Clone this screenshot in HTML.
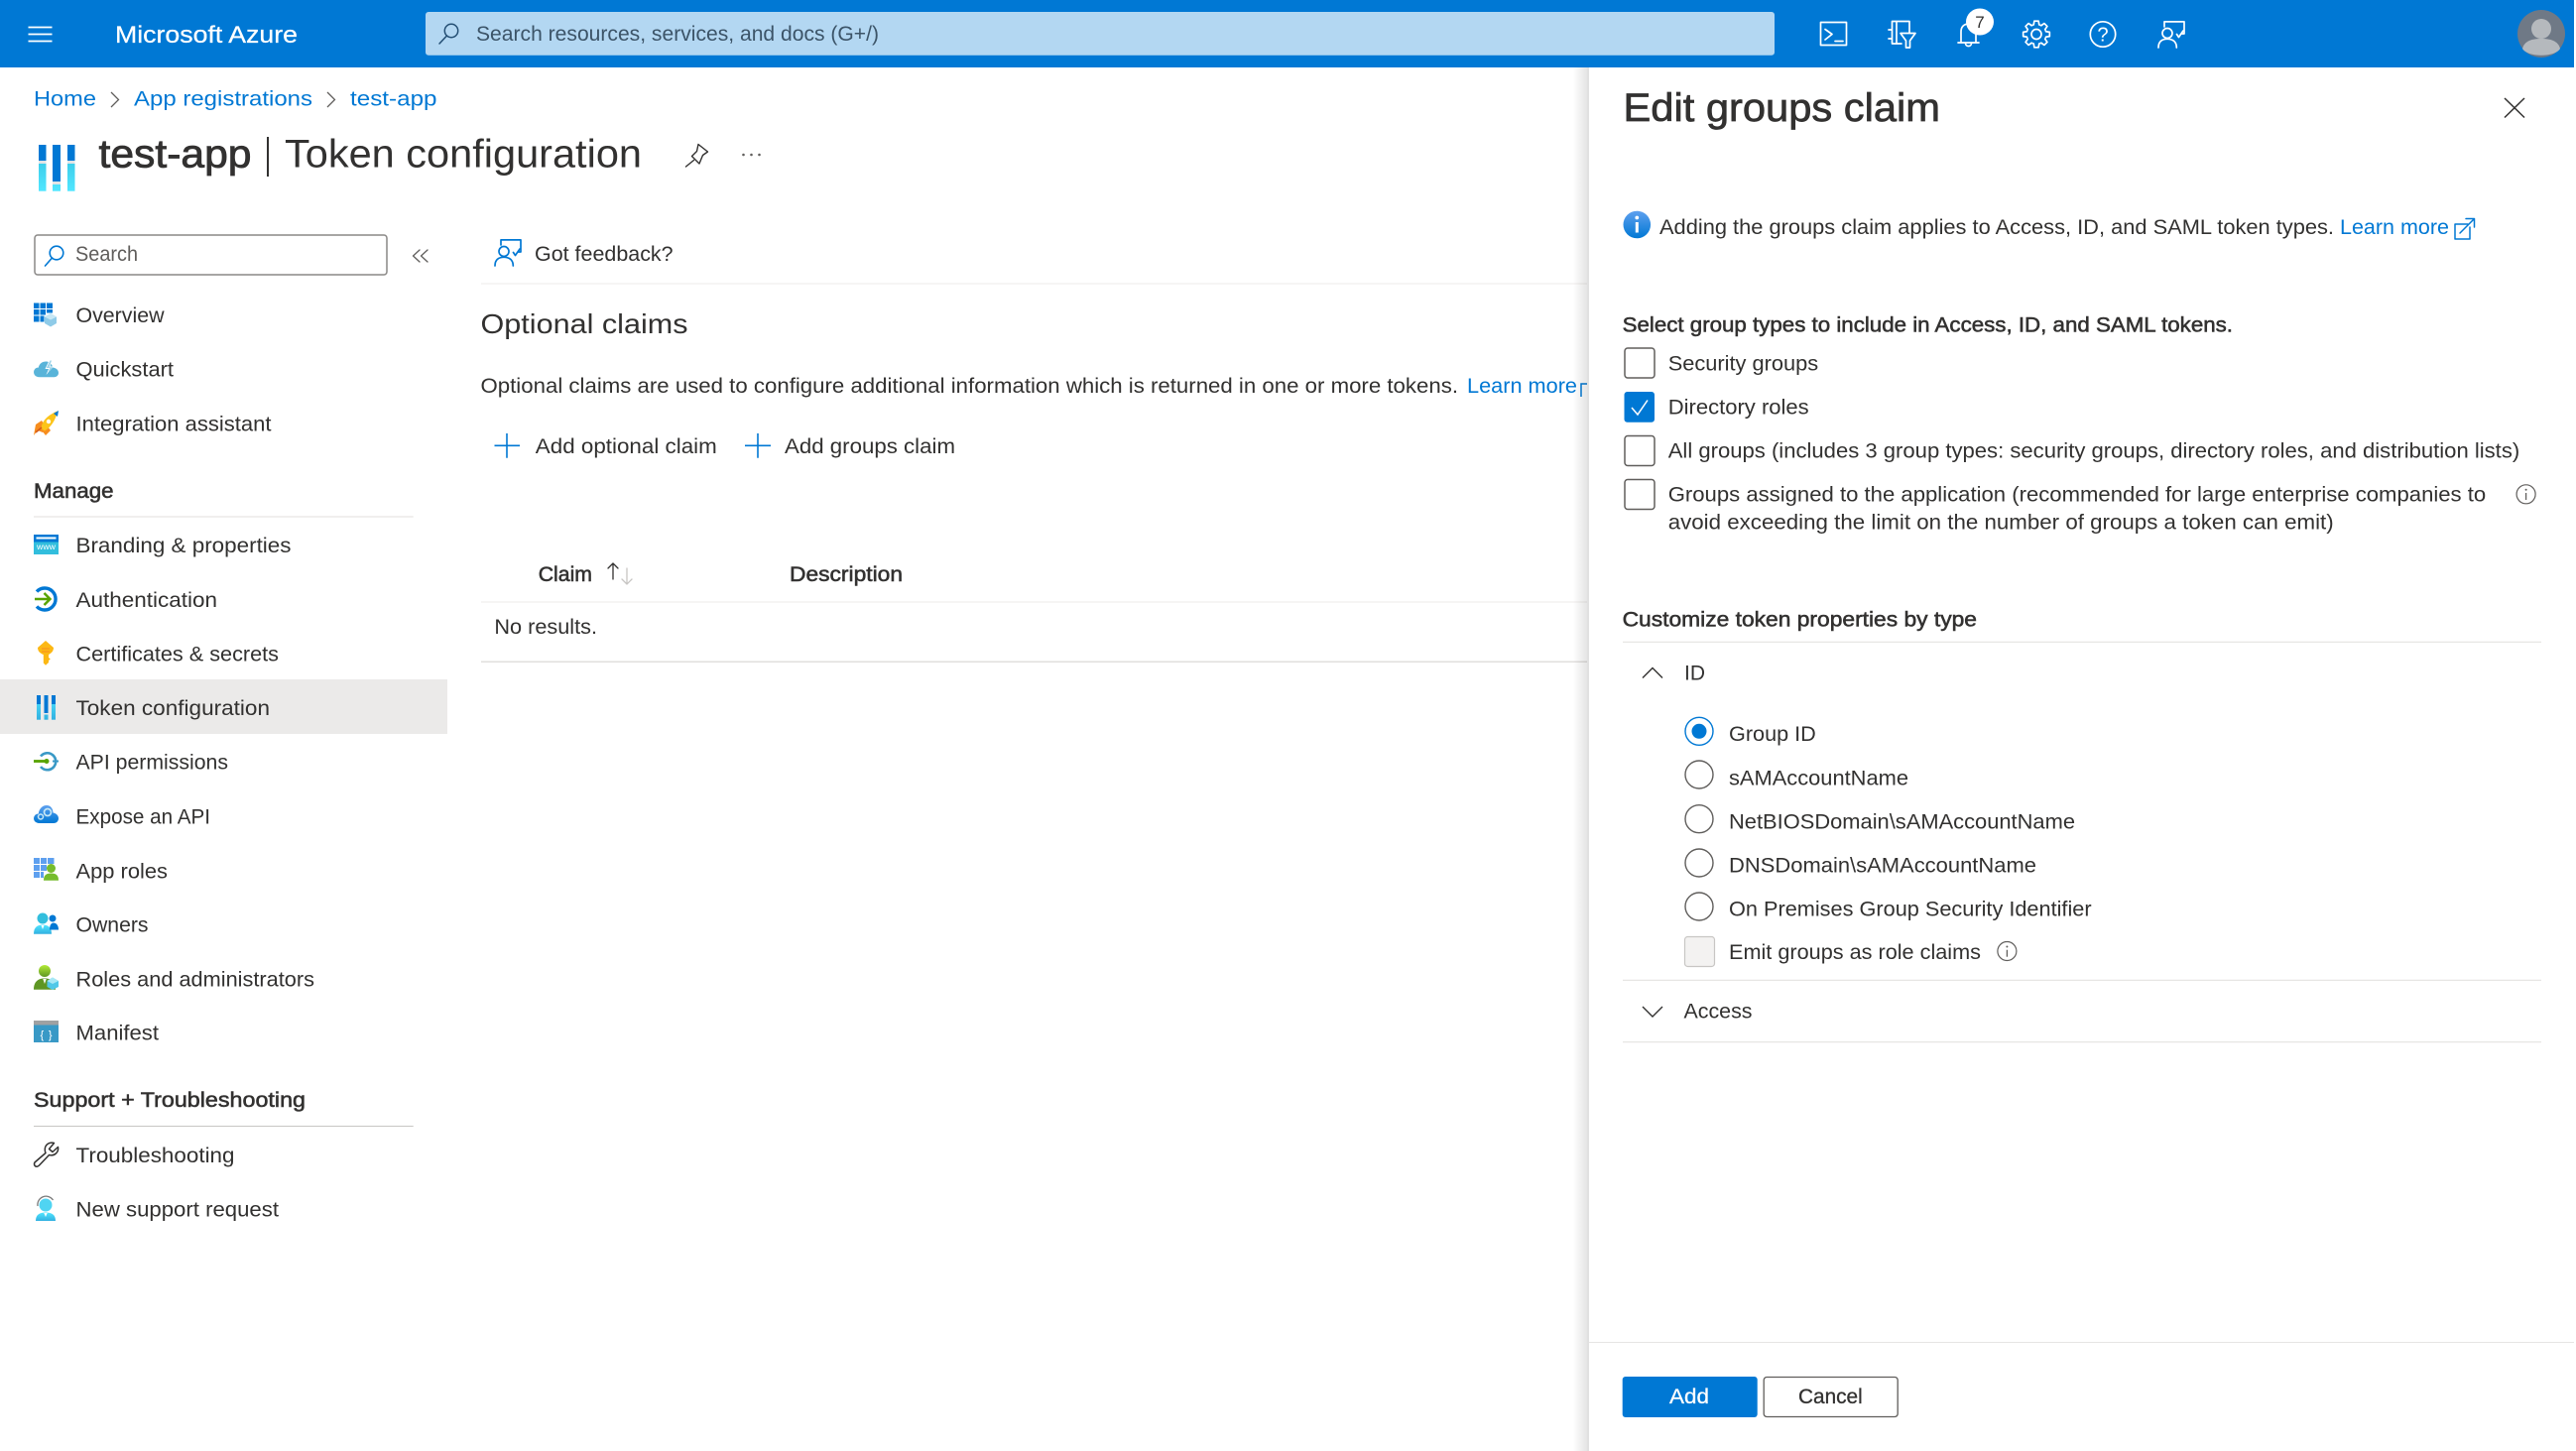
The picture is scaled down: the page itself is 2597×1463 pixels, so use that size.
<!DOCTYPE html>
<html><head><meta charset="utf-8"><title>test-app | Token configuration</title>
<style>
html,body{margin:0;padding:0;background:#fff;width:2597px;height:1463px;overflow:hidden}
svg{display:block;position:absolute;left:0;top:0}
text{font-family:"Liberation Sans",sans-serif;font-size:21.5px;fill:#323130}
.sb{stroke:#323130;stroke-width:.55px}
.lk{fill:#0078d4}
.s{fill:none;stroke-linecap:round;stroke-linejoin:round}
</style></head><body>
<svg width="2597" height="1463" viewBox="0 0 2597 1463" xmlns="http://www.w3.org/2000/svg">
<defs>
<linearGradient id="sh" x1="0" x2="1" y1="0" y2="0"><stop offset="0" stop-color="#000" stop-opacity="0"/><stop offset="1" stop-color="#000" stop-opacity=".12"/></linearGradient>
<linearGradient id="cy" x1="0" x2="0" y1="0" y2="1"><stop offset="0" stop-color="#32bedd"/><stop offset="1" stop-color="#50e6ff"/></linearGradient>
<linearGradient id="ib" x1="0" x2="0" y1="0" y2="1"><stop offset="0" stop-color="#5ea0ef"/><stop offset="1" stop-color="#0078d4"/></linearGradient>
<linearGradient id="pc" x1="0" x2="0" y1="0" y2="1"><stop offset="0" stop-color="#50e6ff"/><stop offset="1" stop-color="#32b0e0"/></linearGradient>
<linearGradient id="pg" x1="0" x2="0" y1="0" y2="1"><stop offset="0" stop-color="#b4ec36"/><stop offset="1" stop-color="#5e9624"/></linearGradient>
<linearGradient id="cl" x1="0" x2="0" y1="0" y2="1"><stop offset="0" stop-color="#5ea0ef"/><stop offset="1" stop-color="#0078d4"/></linearGradient>
<polyline id="tooth" points="-3.83,-9.24 -2.76,-9.61 -2.11,-13.33 2.11,-13.33 2.76,-9.61 3.83,-9.24" fill="none" stroke="#fff" stroke-width="1.7" stroke-linejoin="round"/>
<g id="fb" class="s" stroke-width="1.7">
<path d="M7 .9H27V13H24.5M7 .9V6"/><path d="M19.5 13.5L21.5 16.5L26 10"/>
<circle cx="10" cy="12.5" r="5"/><path d="M1 27C1 21 4.5 18.3 10 18.3S19.3 21 19.3 27"/>
</g>
</defs>

<!-- page background items -->
<rect x="0" y="685" width="451" height="55" fill="#ebeae9"/>

<!-- header -->
<rect x="0" y="0" width="2595" height="68" fill="#0078d4"/>
<g stroke="#fff" stroke-width="1.8"><path d="M28.5 27.5H52.5M28.5 34.5H52.5M28.5 41.5H52.5"/></g>
<text x="116" y="43" textLength="184" lengthAdjust="spacingAndGlyphs" style="font-size:24.5px;fill:#fff;stroke:#fff;stroke-width:.25px">Microsoft Azure</text>
<rect x="429" y="12" width="1360" height="43.7" rx="3" fill="#b3d7f2"/>
<g class="s" stroke="#234e73" stroke-width="1.5"><circle cx="455" cy="31" r="6.7"/><path d="M450.5 36L443 44"/></g>
<text x="480" y="41" textLength="406" lengthAdjust="spacingAndGlyphs" style="fill:#3c5468">Search resources, services, and docs (G+/)</text>

<!-- shell -->
<g class="s" stroke="#fff" stroke-width="1.7"><rect x="1835.5" y="22.5" width="26" height="23"/><path d="M1840 29.5L1847 34.5L1840 40M1850 41.5H1858"/></g>
<!-- directory + filter -->
<g class="s" stroke="#fff" stroke-width="1.7"><path d="M1907.5 21.5H1925V33M1907.5 21.5V44H1917M1904 30H1907.5M1904 39H1907.5M1912 22V43"/><path d="M1916 33.5H1931L1925.5 41V48H1921.5V41Z" fill="#0078d4"/></g>
<!-- bell -->
<g class="s" stroke="#fff" stroke-width="1.7"><path d="M1977 43V32C1977 27 1980 24 1985 24S1992 27 1992 32V43M1974 43H1995"/><path d="M1981.5 43.5C1981.5 47.5 1987.5 47.5 1987.5 43.5"/></g>
<ellipse cx="1996" cy="22" rx="14" ry="13.5" fill="#fff"/>
<text x="1996" y="28" text-anchor="middle" style="font-size:17px;fill:#323130">7</text>
<!-- gear -->
<g transform="translate(2053 34.5)"><use href="#tooth"/><use href="#tooth" transform="rotate(45)"/><use href="#tooth" transform="rotate(90)"/><use href="#tooth" transform="rotate(135)"/><use href="#tooth" transform="rotate(180)"/><use href="#tooth" transform="rotate(225)"/><use href="#tooth" transform="rotate(270)"/><use href="#tooth" transform="rotate(315)"/><circle r="5" fill="none" stroke="#fff" stroke-width="1.7"/></g>
<!-- help -->
<circle cx="2120" cy="34.5" r="12.7" fill="none" stroke="#fff" stroke-width="1.7"/>
<text x="2120" y="41.5" text-anchor="middle" style="font-size:20px;fill:#fff">?</text>
<!-- feedback -->
<use href="#fb" x="2175" y="21" stroke="#fff"/>
<!-- avatar -->
<circle cx="2562" cy="34" r="24" fill="#6f7986"/>
<circle cx="2562" cy="29" r="10" fill="#b5b9bd"/>
<path d="M2543 49C2545 41 2553 39 2562 39S2579 41 2581 49C2576 58 2548 58 2543 49Z" fill="#b5b9bd"/>

<!-- breadcrumb -->
<text class="lk" x="34" y="106.5" textLength="63" lengthAdjust="spacingAndGlyphs">Home</text>
<path d="M112 93L119.500 100.500L112 108" fill="none" stroke="#605e5c" stroke-width="1.3"/>
<text class="lk" x="135" y="106.500" textLength="180" lengthAdjust="spacingAndGlyphs">App registrations</text>
<path d="M330 93L337.500 100.500L330 108" fill="none" stroke="#605e5c" stroke-width="1.3"/>
<text class="lk" x="353" y="106.500" textLength="87.500" lengthAdjust="spacingAndGlyphs">test-app</text>

<!-- title -->
<rect x="39" y="146" width="7.500" height="46.700" fill="url(#cy)"/><rect x="39" y="146" width="7.500" height="17" fill="#0078d4"/><rect x="39" y="162" width="7.500" height="3" fill="#e1e3e5"/>
<rect x="53" y="146" width="8" height="46.700" fill="url(#cy)"/><rect x="53" y="146" width="8" height="37" fill="#0078d4"/><rect x="53" y="183" width="8" height="3" fill="#e1e3e5"/>
<rect x="68" y="146" width="7.500" height="46.700" fill="url(#cy)"/><rect x="68" y="146" width="7.500" height="17" fill="#0078d4"/><rect x="68" y="162" width="7.500" height="3" fill="#e1e3e5"/>
<text x="99.500" y="168.500" textLength="154" lengthAdjust="spacingAndGlyphs" style="font-size:40px;stroke:#323130;stroke-width:.8px">test-app</text>
<rect x="269" y="138" width="2" height="40" fill="#323130"/>
<text x="287" y="168.500" textLength="360" lengthAdjust="spacingAndGlyphs" style="font-size:40px">Token configuration</text>
<g class="s" stroke="#323130" stroke-width="1.4"><path d="M704 145.500L713.500 153L708.500 156.500L705 165L697.500 157.500L702.500 152.500Z"/><path d="M699.500 161.500L691.500 168"/></g>
<g fill="#605e5c"><circle cx="749.500" cy="156" r="1.300"/><circle cx="757.500" cy="156" r="1.300"/><circle cx="765.500" cy="156" r="1.300"/></g>

<!-- sidebar search -->
<rect x="35" y="237" width="355" height="40" rx="3" fill="#fff" stroke="#8a8886" stroke-width="1.500"/>
<g class="s" stroke="#0078d4" stroke-width="1.600"><circle cx="57" cy="255" r="6.800"/><path d="M52.500 260L45.500 268"/></g>
<text x="76" y="263" textLength="63" lengthAdjust="spacingAndGlyphs" style="fill:#605e5c">Search</text>
<g class="s" stroke="#605e5c" stroke-width="1.300"><path d="M423 252L416.500 258L423 264M431 252L424.500 258L431 264"/></g>

<!-- sidebar text -->
<g transform="translate(-.5 -1)">
<text x="77" y="326" textLength="89" lengthAdjust="spacingAndGlyphs">Overview</text>
<text x="77" y="380.500" textLength="98.500" lengthAdjust="spacingAndGlyphs">Quickstart</text>
<text x="77" y="435.300" textLength="197" lengthAdjust="spacingAndGlyphs">Integration assistant</text>
<text class="sb" x="34.500" y="503" textLength="80.500" lengthAdjust="spacingAndGlyphs">Manage</text>
<text x="77" y="558" textLength="217" lengthAdjust="spacingAndGlyphs">Branding &amp; properties</text>
<text x="77" y="613" textLength="142.500" lengthAdjust="spacingAndGlyphs">Authentication</text>
<text x="77" y="667.300" textLength="204.500" lengthAdjust="spacingAndGlyphs">Certificates &amp; secrets</text>
<text x="77" y="722" textLength="195.500" lengthAdjust="spacingAndGlyphs">Token configuration</text>
<text x="77" y="776.500" textLength="153.500" lengthAdjust="spacingAndGlyphs">API permissions</text>
<text x="77" y="831.500" textLength="135.500" lengthAdjust="spacingAndGlyphs">Expose an API</text>
<text x="77" y="886.500" textLength="92.500" lengthAdjust="spacingAndGlyphs">App roles</text>
<text x="77" y="940.500" textLength="73" lengthAdjust="spacingAndGlyphs">Owners</text>
<text x="77" y="995.300" textLength="240.500" lengthAdjust="spacingAndGlyphs">Roles and administrators</text>
<text x="77" y="1049.500" textLength="83.500" lengthAdjust="spacingAndGlyphs">Manifest</text>
<text class="sb" x="34.500" y="1117" textLength="274" lengthAdjust="spacingAndGlyphs">Support + Troubleshooting</text>
<text x="77" y="1173" textLength="160" lengthAdjust="spacingAndGlyphs">Troubleshooting</text>
<text x="77" y="1227.500" textLength="204.500" lengthAdjust="spacingAndGlyphs">New support request</text>
</g>
<rect x="34" y="520.500" width="382.700" height="1" fill="#e1dfdd"/>
<rect x="34" y="1135" width="382.700" height="1" fill="#c8c6c4"/>

<!-- sidebar icons -->
<!-- overview -->
<g fill="#0078d4"><rect x="34" y="305.500" width="5.500" height="5.500"/><rect x="40.500" y="305.500" width="5.500" height="5.500"/><rect x="47" y="305.500" width="6" height="5.500"/><rect x="34" y="312" width="5.500" height="5.500"/><rect x="40.500" y="312" width="5.500" height="5.500"/><rect x="47" y="312" width="6" height="3.500"/><rect x="34" y="318.500" width="5.500" height="6"/><rect x="40.500" y="318.500" width="4" height="6"/></g>
<path d="M51 316L57 319.500V326L51 329.500L45 326V319.500Z" fill="#8fcbe8"/><path d="M45 319.500L51 322.500L57 319.500L51 316Z" fill="#c7e7f5"/>
<!-- quickstart -->
<path d="M40 380.300C35 380.300 33.500 376.500 34.200 374C35 371.500 37 370.500 38.700 370.700C39.500 366.800 42.500 364.500 46.500 364.500C50 364.500 52.700 367 53 370.500C56.500 370.800 59 373 59 376C59 379 56.500 380.300 54 380.300Z" fill="#59b4d9"/>
<path d="M50 362.500L45.500 372H49L46.500 378L54 369.500H50.500L53 362.500Z" fill="#fff"/><path d="M50.500 363.500L46.800 371H50.300L48 376.500L53 370.300H49.500L52 363.500Z" fill="#59b4d9" opacity=".6"/>
<!-- rocket -->
<path d="M34 439L36 428L42 424L47 432L43 436L38 434Z" fill="#f78d1e"/><path d="M42 434L48 430L51 434L46 439Z" fill="#f78d1e"/>
<path d="M41.500 432C42 424 49 418 58 414.500C56 424 51 431 45 434.500Z" fill="#fcc419"/>
<path d="M54 417L59 414L58 420Z" fill="#0078d4"/><circle cx="49" cy="425" r="2.200" fill="#fff"/>
<path d="M36 436L42 431" stroke="#d1591a" stroke-width="1.500"/>
<!-- branding -->
<rect x="34" y="539" width="25" height="20" fill="#32bedd"/><rect x="34" y="539" width="25" height="7.500" fill="#0078d4"/><rect x="36.500" y="541.500" width="20" height="2" fill="#fff"/>
<text x="37" y="554" textLength="19" lengthAdjust="spacingAndGlyphs" style="font-size:8.500px;fill:#fff">www</text>
<!-- authentication -->
<path d="M37 596.500A11 11 0 1 1 37 611.500" fill="none" stroke="#0078d4" stroke-width="3.400"/>
<path d="M35 604H50M44.500 598L50.500 604L44.500 610" fill="none" stroke="#57a300" stroke-width="2.400"/>
<!-- key -->
<path d="M46 646L54 653C54 657 51 659 49 660V663L50.800 664.500L49 666V668L46 670.700L43.800 668.500V660C41 659 38 657 38 653Z" fill="#fcb814"/>
<path d="M42 654H50M42 657H50" stroke="#f78d1e" stroke-width="1"/>
<!-- token -->
<g><rect x="37" y="701" width="4" height="24.700" fill="url(#pc)"/><rect x="37" y="701" width="4" height="9" fill="#0078d4"/>
<rect x="44.500" y="701" width="4" height="24.700" fill="url(#pc)"/><rect x="44.500" y="701" width="4" height="18" fill="#0078d4"/><rect x="44.500" y="719" width="4" height="1.500" fill="#ebeae9"/>
<rect x="52" y="701" width="4" height="24.700" fill="url(#pc)"/><rect x="52" y="701" width="4" height="9" fill="#0078d4"/></g>
<!-- api perms -->
<path d="M41 762.500A8.500 8.500 0 1 1 41 773" fill="none" stroke="#3999c6" stroke-width="2.600"/>
<path d="M53 767.500H59" stroke="#3999c6" stroke-width="2"/>
<path d="M34 767.500H47" stroke="#57a300" stroke-width="2.800"/><circle cx="47" cy="767.500" r="2.500" fill="#57a300"/>
<!-- expose -->
<path d="M40 830C35 830 33.500 826.500 34.200 824C35 821.500 37 820.500 38.700 820.700C39.500 815 43 812 47 812C50.800 812 53.300 815 53.500 819.500C56.800 820 59 822.500 59 825C59 828 57 830 54 830Z" fill="url(#cl)"/>
<circle cx="48" cy="819" r="3.500" fill="none" stroke="#c7e7f5" stroke-width="1.700"/><circle cx="41" cy="823.500" r="2.500" fill="none" stroke="#c7e7f5" stroke-width="1.500"/>
<!-- app roles -->
<g fill="#5ea0ef"><rect x="34" y="865" width="6" height="6"/><rect x="41" y="865" width="6" height="6"/><rect x="48" y="865" width="6.500" height="6"/><rect x="34" y="872" width="6" height="6"/><rect x="41" y="872" width="6" height="6"/><rect x="34" y="879" width="6" height="6"/><rect x="41" y="879" width="3" height="6"/></g>
<circle cx="51.500" cy="875.500" r="4.500" fill="#76bc2d"/><path d="M44 887.700C44 882 47 880.500 51.500 880.500S59 882 59 887.700Z" fill="#76bc2d"/>
<!-- owners -->
<circle cx="43" cy="926" r="5.500" fill="#32bedd"/><path d="M34 941.700C34 935 37.500 932.500 43 932.500S52 935 52 941.700Z" fill="url(#pc)"/><path d="M41.500 933L43 937L44.500 933Z" fill="#fff"/>
<circle cx="53" cy="926" r="3.500" fill="#0078d4"/><path d="M50 937.500C50 932 52 930.500 54 930.500S59 932 59 937.500Z" fill="#0078d4"/>
<!-- roles admin -->
<circle cx="45" cy="979" r="6" fill="url(#pg)"/><path d="M34 997.700C34 990 38 986.500 45 986.500S56 990 56 997.700Z" fill="#5e9624"/><path d="M43.300 987L45 992L46.700 987Z" fill="#fff"/>
<path d="M53 985.500L59 989V995L53 998L47.500 995V989Z" fill="#50c8e8"/><path d="M47.500 989L53 992L59 989L53 985.500Z" fill="#a7e8f5"/>
<!-- manifest -->
<rect x="34" y="1029" width="25" height="22" fill="#3999c6"/><rect x="34" y="1029" width="25" height="4.500" fill="#a0a1a2"/>
<text x="40.500" y="1047" textLength="12" lengthAdjust="spacing" style="font-size:11px;fill:#fff">{ }</text>
<!-- wrench -->
<path d="M58.500 1156.500L53 1161.500L49.500 1158.500L54.500 1152.500C50 1151 45 1154 45.300 1159.500C45.300 1160.500 45.500 1161.500 46 1162.500L35 1172C33.800 1174 35 1176.500 37.500 1176.200C38.500 1176 39 1175.500 39.500 1175L49.500 1164.500C54.500 1166 59.500 1162 58.500 1156.500Z" fill="none" stroke="#323130" stroke-width="1.500" stroke-linejoin="round"/>
<!-- support -->
<circle cx="46" cy="1215" r="6.500" fill="#50d4f2"/><path d="M38 1216A8.500 8.500 0 0 1 53.500 1210" fill="none" stroke="#7a7a7a" stroke-width="1.300"/>
<path d="M36 1231C36 1225 39.500 1222.500 46 1222.500S56 1225 56 1231Z" fill="url(#pc)"/><path d="M44.300 1223L46 1227L47.700 1223Z" fill="#fff"/>

<!-- main -->
<use href="#fb" x="498" y="241" stroke="#0078d4"/>
<text x="539" y="263" textLength="139.600" lengthAdjust="spacingAndGlyphs">Got feedback?</text>
<rect x="485" y="285.500" width="1120" height="1" fill="#edebe9"/>
<text x="484.500" y="336" textLength="209" lengthAdjust="spacingAndGlyphs" style="font-size:27.500px">Optional claims</text>
<text x="484.500" y="396" textLength="985.500" lengthAdjust="spacingAndGlyphs">Optional claims are used to configure additional information which is returned in one or more tokens.</text>
<text class="lk" x="1479" y="396" textLength="111" lengthAdjust="spacingAndGlyphs">Learn more</text>
<path d="M1594 400V387H1600" fill="none" stroke="#0078d4" stroke-width="1.500"/>
<path d="M511 437V461.700M498.500 449.300H524" stroke="#0078d4" stroke-width="1.600"/>
<text x="539.800" y="457" textLength="183" lengthAdjust="spacingAndGlyphs">Add optional claim</text>
<path d="M764 437V461.700M751 449.300H777" stroke="#0078d4" stroke-width="1.600"/>
<text x="791" y="457" textLength="172" lengthAdjust="spacingAndGlyphs">Add groups claim</text>
<text class="sb" x="542.700" y="586" textLength="54.300" lengthAdjust="spacingAndGlyphs">Claim</text>
<g class="s" stroke-width="1.300"><path d="M618 584V568M613 573L618 568L623 573" stroke="#323130"/><path d="M632 573V589M627 584L632 589L637 584" stroke="#c8c6c4"/></g>
<text class="sb" x="796" y="586" textLength="114" lengthAdjust="spacingAndGlyphs">Description</text>
<rect x="485" y="606.500" width="1120" height="1" fill="#edebe9"/>
<text x="498.400" y="639" textLength="103.600" lengthAdjust="spacingAndGlyphs">No results.</text>
<rect x="485" y="666.500" width="1120" height="1.500" fill="#e1dfdd"/>

<!-- panel -->
<rect x="1586" y="68" width="16" height="1395" fill="url(#sh)"/>
<rect x="1602" y="68" width="995" height="1395" fill="#fff"/>
<rect x="1600" y="68" width="2" height="1395" fill="#e1e1e1"/>
<text x="1636.500" y="122" textLength="319.500" lengthAdjust="spacingAndGlyphs" style="font-size:40px;stroke:#323130;stroke-width:.7px">Edit groups claim</text>
<path d="M2525 99L2545 118.500M2545 99L2525 118.500" stroke="#323130" stroke-width="1.500"/>

<circle cx="1650.300" cy="226.500" r="13.800" fill="url(#ib)"/>
<rect x="1648.800" y="224" width="3" height="10.500" fill="#fff"/><circle cx="1650.300" cy="219.500" r="1.900" fill="#fff"/>
<text x="1673" y="236" textLength="680" lengthAdjust="spacingAndGlyphs">Adding the groups claim applies to Access, ID, and SAML token types.</text>
<text class="lk" x="2359" y="236" textLength="110" lengthAdjust="spacingAndGlyphs">Learn more</text>
<g class="s" stroke="#0078d4" stroke-width="1.500"><path d="M2488 226H2475V241H2490V229"/><path d="M2480 235L2494 221M2486 220.500H2494.500V229"/></g>

<text class="sb" x="1635.600" y="334.500" textLength="615.400" lengthAdjust="spacingAndGlyphs">Select group types to include in Access, ID, and SAML tokens.</text>

<g fill="#fff" stroke="#605e5c" stroke-width="1.500">
<rect x="1638" y="351" width="30" height="30" rx="3"/>
<rect x="1638" y="439.500" width="30" height="30" rx="3"/>
<rect x="1638" y="483.500" width="30" height="30" rx="3"/>
</g>
<rect x="1637.500" y="395" width="30.500" height="30.700" rx="3" fill="#0078d4"/>
<path d="M1645 411L1651 418L1661 403.500" fill="none" stroke="#fff" stroke-width="1.500"/>
<g transform="translate(-.3 -.7)">
<text x="1682" y="374.300" textLength="151.500" lengthAdjust="spacingAndGlyphs">Security groups</text>
<text x="1682" y="418.300" textLength="142" lengthAdjust="spacingAndGlyphs">Directory roles</text>
<text x="1682" y="462.300" textLength="858.500" lengthAdjust="spacingAndGlyphs">All groups (includes 3 group types: security groups, directory roles, and distribution lists)</text>
<text x="1682" y="506" textLength="824.500" lengthAdjust="spacingAndGlyphs">Groups assigned to the application (recommended for large enterprise companies to</text>
<text x="1682" y="534.300" textLength="671" lengthAdjust="spacingAndGlyphs">avoid exceeding the limit on the number of groups a token can emit)</text>
</g>
<circle cx="2546.600" cy="498.300" r="9.500" fill="none" stroke="#605e5c" stroke-width="1.200"/>
<path d="M2546.600 497V504" stroke="#605e5c" stroke-width="1.300"/><circle cx="2546.600" cy="493.800" r="1" fill="#605e5c"/>

<text class="sb" x="1635.600" y="631.700" textLength="357.400" lengthAdjust="spacingAndGlyphs">Customize token properties by type</text>
<rect x="1636" y="646.800" width="926" height="1" fill="#e1dfdd"/>
<path d="M1656 683.500L1666 673.500L1676 683.500" fill="none" stroke="#323130" stroke-width="1.400"/>
<text x="1698" y="685.500" textLength="21" lengthAdjust="spacingAndGlyphs">ID</text>

<g fill="#fff" stroke="#605e5c" stroke-width="1.400">
<circle cx="1713" cy="781" r="14"/><circle cx="1713" cy="825.700" r="14"/><circle cx="1713" cy="870" r="14"/><circle cx="1713" cy="914" r="14"/>
</g>
<circle cx="1713" cy="737.300" r="14" fill="#fff" stroke="#0078d4" stroke-width="1.400"/><circle cx="1713" cy="737.300" r="7.500" fill="#0078d4"/>
<text x="1743" y="747" textLength="87.800" lengthAdjust="spacingAndGlyphs">Group ID</text>
<text x="1743" y="791.300" textLength="181" lengthAdjust="spacingAndGlyphs">sAMAccountName</text>
<text x="1743" y="835.700" textLength="349" lengthAdjust="spacingAndGlyphs">NetBIOSDomain\sAMAccountName</text>
<text x="1743" y="879.700" textLength="310" lengthAdjust="spacingAndGlyphs">DNSDomain\sAMAccountName</text>
<text x="1743" y="923.700" textLength="365.600" lengthAdjust="spacingAndGlyphs">On Premises Group Security Identifier</text>
<rect x="1698.500" y="944.500" width="30" height="30" rx="3" fill="#f3f2f1" stroke="#c8c6c4" stroke-width="1.200"/>
<text x="1743" y="967" textLength="254" lengthAdjust="spacingAndGlyphs">Emit groups as role claims</text>
<circle cx="2023.400" cy="959" r="9.500" fill="none" stroke="#605e5c" stroke-width="1.200"/>
<path d="M2023.400 957.700V964.700" stroke="#605e5c" stroke-width="1.300"/><circle cx="2023.400" cy="954.500" r="1" fill="#605e5c"/>
<rect x="1636" y="987.800" width="926" height="1" fill="#e1dfdd"/>
<path d="M1656 1015L1666 1025L1676 1015" fill="none" stroke="#323130" stroke-width="1.400"/>
<text x="1697.500" y="1026.500" textLength="69" lengthAdjust="spacingAndGlyphs">Access</text>
<rect x="1636" y="1050.200" width="926" height="1" fill="#e1dfdd"/>

<!-- footer -->
<rect x="1602" y="1353" width="993" height="1" fill="#e6e5e4"/>
<rect x="1635.700" y="1388" width="136" height="41" rx="3" fill="#0078d4"/>
<text x="1683" y="1415" textLength="40" lengthAdjust="spacingAndGlyphs" style="fill:#fff;stroke:#fff;stroke-width:.3px">Add</text>
<rect x="1778.200" y="1388.500" width="135" height="40" rx="3" fill="#fff" stroke="#605e5c" stroke-width="1.300"/>
<text x="1813" y="1415" textLength="64.700" lengthAdjust="spacingAndGlyphs" style="stroke:#323130;stroke-width:.3px">Cancel</text>
</svg>
</body></html>
